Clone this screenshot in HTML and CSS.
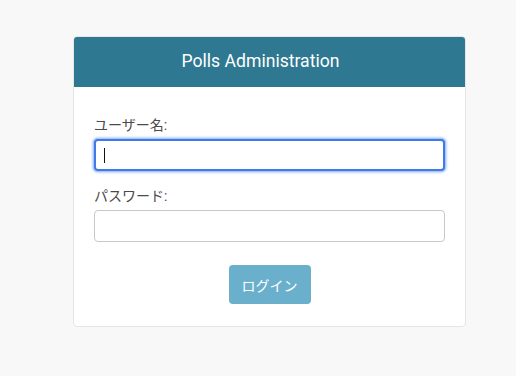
FILE: index.html
```html
<!DOCTYPE html>
<html lang="ja">
<head>
    <meta charset="UTF-8">
    <title>Polls Administration</title>
    <link rel="stylesheet" href="styles.css">
</head>
<body>
<div class="login-card">
    <div class="login-header">Polls Administration</div>
    <form class="login-form" onsubmit="return false">
        <label class="field-label" for="username">ユーザー名:</label>
        <div class="input-wrap caret">
            <input class="field-input focused" id="username" type="text">
        </div>
        <label class="field-label" for="password">パスワード:</label>
        <div class="input-wrap">
            <input class="field-input" id="password" type="password">
        </div>
        <div class="actions">
            <button class="login-btn" type="submit">ログイン</button>
        </div>
    </form>
</div>
</body>
</html>
```

FILE: styles.css
```css
body {
    margin: 0;
    padding: 36px 0 0 73px;
    background-color: #f8f8f8;
    font-family: Roboto, "Noto Sans CJK JP", sans-serif;
    color: #333;
}

.login-card {
    width: 393px;
    box-sizing: border-box;
    background-color: #fff;
    border: 1px solid #e6e6e6;
    border-radius: 4px;
    overflow: hidden;
}

.login-header {
    height: 51px;
    line-height: 51px;
    background-color: #2e7891;
    color: #fff;
    font-size: 17.6px;
    text-align: center;
    padding-right: 18px;
    margin: -1px -1px 0 -1px;
}

.login-form {
    display: flex;
    flex-direction: column;
    padding: 28px 20px 22px 20px;
}

.field-label {
    font-size: 14px;
    line-height: 20px;
    color: #4a4a4a;
    margin-bottom: 4px;
}

.input-wrap {
    position: relative;
    display: flex;
    flex-direction: column;
    margin-bottom: 15px;
}

/* fake text cursor, the input is focused in the screenshot */
.input-wrap.caret::after {
    content: "";
    position: absolute;
    left: 10px;
    top: 9px;
    width: 1px;
    height: 15px;
    background-color: #111;
}

.field-input {
    height: 32px;
    box-sizing: border-box;
    border: 1px solid #c8c8c8;
    border-radius: 4px;
    padding: 0 8px;
    font-size: 14px;
    outline: none;
}

.field-input.focused {
    border: 2px solid #3f7ae6;
    box-shadow: 0 0 0 1px #a9c6f5, 0 0 3px 1px #7aa6f0;
}

.actions {
    display: flex;
    justify-content: center;
    padding-top: 8px;
}

.login-btn {
    width: 82px;
    height: 39px;
    border: none;
    border-radius: 4px;
    background-color: #6ab0cc;
    color: #fff;
    font-family: Roboto, "Noto Sans CJK JP", sans-serif;
    font-size: 14px;
    cursor: pointer;
}
```
